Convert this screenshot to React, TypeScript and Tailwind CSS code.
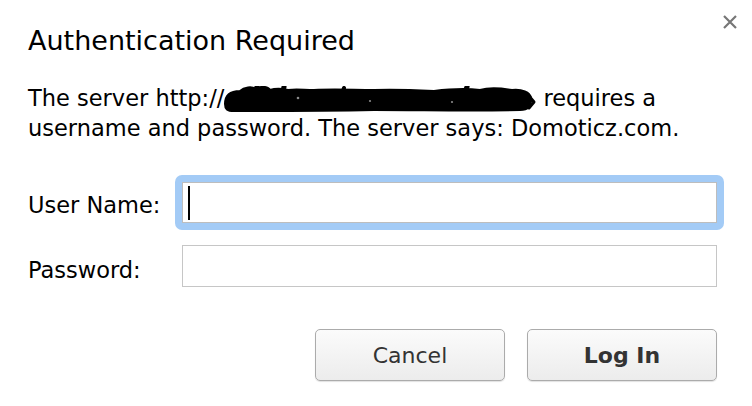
import React from "react";

const Redaction = () => (
  <svg
    width="312"
    height="26"
    viewBox="0 0 312 26"
    className="inline-block align-[-6px]"
  >
    <g fill="#000" stroke="#000" strokeLinecap="round" strokeLinejoin="round">
      <path
        d="M1 18 C1 8 8 5 16 5 C20 1 28 0 32 3 C36 0 44 0 46 4 C52 2 60 3 64 4 C72 3 80 4 90 4 C110 3 130 4 150 4 C170 3 190 4 210 5 C226 3 240 2 256 4 C266 1 276 2 288 4 C298 3 306 6 307 12 C308 20 304 24 296 24 C250 25 200 24 150 24 C100 25 50 25 10 25 C3 25 1 23 1 18 Z"
        strokeWidth="2"
      />
      <path d="M30 8 L33 1" strokeWidth="5" fill="none" />
      <path d="M58 8 L60 1" strokeWidth="5" fill="none" />
      <path d="M118 8 L120 2" strokeWidth="4" fill="none" />
      <path d="M240 8 L243 1" strokeWidth="5" fill="none" />
      <circle cx="272" cy="7" r="5" stroke="none" />
      <path d="M305 10 L310 16 L305 22" strokeWidth="3" fill="none" />
    </g>
    <g fill="#8a8a8a">
      <circle cx="74" cy="12" r="1.3" />
      <circle cx="146" cy="15" r="1.1" />
      <circle cx="228" cy="16" r="1.1" />
    </g>
  </svg>
);

const btn =
  "w-[190px] h-[52px] rounded-[5px] border border-[#ababab] bg-gradient-to-b from-[#fbfbfb] to-[#ececec] shadow-[0_1px_1px_rgba(0,0,0,0.12)] text-[22px] text-[#333]";

export default function App() {
  return (
    <div
      className="relative w-[752px] h-[406px] bg-white text-black overflow-hidden"
      style={{ fontFamily: '"DejaVu Sans", sans-serif' }}
    >
      {/* close */}
      <button className="absolute top-[14px] right-[14px] w-[16px] h-[16px]" aria-label="Close">
        <svg width="16" height="16" viewBox="0 0 16 16">
          <path d="M2 2 L14 14 M14 2 L2 14" stroke="#777" strokeWidth="2.2" fill="none" />
        </svg>
      </button>

      <div className="pl-[28px] pt-[25px]">
        <h1 className="text-[27px] leading-[32px] font-normal">Authentication Required</h1>

        <p className="mt-[26px] text-[22.5px] leading-[30px] whitespace-nowrap">
          The server http://<Redaction /> requires a
          <br />
          username and password. The server says: Domoticz.com.
        </p>

        <div className="mt-[39px] flex items-start">
          <label className="w-[154px] pt-[8px] text-[22.5px] leading-[30px]">User Name:</label>
          <div className="-m-[7px] p-[7px] rounded-[7px] bg-[#a3cbf6]">
            <div className="relative w-[535px] h-[41px] bg-white border border-[#bdbdbd]">
              <div className="absolute left-[5px] top-[3px] w-[2px] h-[34px] bg-black" />
            </div>
          </div>
        </div>

        <div className="mt-[22px] flex items-start">
          <label className="w-[154px] pt-[10px] text-[22.5px] leading-[30px]">Password:</label>
          <div className="w-[535px] h-[42px] bg-white border border-[#c6c6c6]" />
        </div>

        <div className="mt-[42px] pr-[35px] flex justify-end gap-[22px]">
          <button className={btn}>Cancel</button>
          <button className={`${btn} font-bold`}>Log In</button>
        </div>
      </div>
    </div>
  );
}
